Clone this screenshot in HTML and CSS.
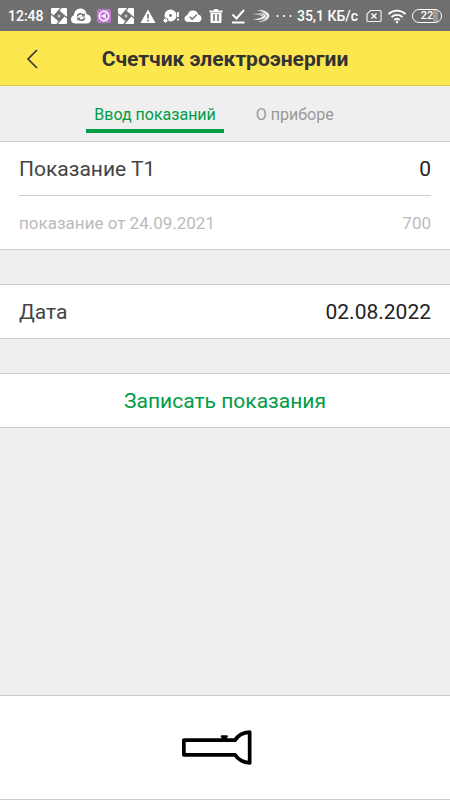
FILE: index.html
```html
<!DOCTYPE html>
<html lang="ru">
<head>
<meta charset="utf-8">
<meta name="viewport" content="width=device-width, initial-scale=1">
<title>Счетчик электроэнергии</title>
<link rel="stylesheet" href="styles.css">
</head>
<body>
<div class="status">
  <span class="status-text">12:48</span>
  <div class="status-icons" aria-hidden="true">
    <svg class="icon" viewBox="0 0 20 20"><rect x="2" y="2" width="16" height="16" rx="1" fill="#fff"/><path d="M10 5l5 5-5 5-5-5z" fill="#6f6f6f"/><path d="M5 10l7-8M10 5l8 7M15 10l-7 8M10 15l-8-7" fill="none" stroke="#6f6f6f" stroke-width="1.200"/><path d="M10 8l2 2-2 2-2-2z" fill="#bbb"/></svg>
    <svg class="icon" viewBox="0 0 20 20"><path d="M4 17.500C1 17.500 0 15.500 0 13.300c0-2 1.200-3.600 3-4C3 5.500 5.500 2.500 9.300 2.500c3.600 0 6 2.400 6.300 5.700 2.700.3 4.400 2.300 4.400 4.800 0 2.700-1.600 4.500-4.200 4.500z" fill="#fff"/><path d="M6.500 10.500c0-2.700 3.500-4 6-1.500M13.500 11.500c0 2.700-3.500 4-6 1.500" fill="none" stroke="#6f6f6f" stroke-width="1.500"/><path d="M13.700 7v3.500h-3.500zM6.300 15v-3.500h3.500z" fill="#6f6f6f"/></svg>
    <svg class="icon" viewBox="0 0 20 20"><rect x="3" y="3" width="14" height="14" rx="2.500" fill="#c278cf"/><circle cx="10" cy="10" r="4.700" fill="none" stroke="#fff" stroke-width="1.500"/><path d="M10 10L6.500 10M10 10l2.500-3.500M10 10l2.500 3.500" stroke="#fff" stroke-width="1.200"/><circle cx="10" cy="10" r="1.500" fill="#fff"/></svg>
    <svg class="icon" viewBox="0 0 20 20"><rect x="2" y="2" width="16" height="16" rx="1" fill="#fff"/><path d="M10 5l5 5-5 5-5-5z" fill="#6f6f6f"/><path d="M5 10l7-8M10 5l8 7M15 10l-7 8M10 15l-8-7" fill="none" stroke="#6f6f6f" stroke-width="1.200"/><path d="M10 8l2 2-2 2-2-2z" fill="#bbb"/></svg>
    <svg class="icon" viewBox="0 0 20 20"><path d="M10 3.500L17.500 17h-15z" fill="#fff"/><path d="M10 8v4.500M10 13.700v1.700" stroke="#6f6f6f" stroke-width="1.600"/></svg>
    <svg class="icon" viewBox="0 0 20 20"><circle cx="9.500" cy="9.500" r="6" fill="#fff"/><circle cx="9.500" cy="9.500" r="1.400" fill="#6f6f6f"/><circle cx="4.500" cy="14.500" r="2.500" fill="#fff" stroke="#6f6f6f"/><path d="M17 6v5M17 12.500v2" stroke="#fff" stroke-width="1.800"/></svg>
    <svg class="icon" viewBox="0 0 20 20"><path d="M5.500 16C3 16 1.500 14.500 1.500 12.500c0-1.900 1.300-3.200 3-3.500C5 6.500 7.100 4.500 10 4.500c2.700 0 4.700 1.600 5.200 4.200 2 .1 3.300 1.600 3.300 3.500 0 2.200-1.500 3.800-3.700 3.800z" fill="#fff"/><path d="M6.700 10.700l2.500 2.500 4.500-4.500" fill="none" stroke="#6f6f6f" stroke-width="1.600"/></svg>
    <svg class="icon" viewBox="0 0 20 20"><path d="M3.500 4.500h4l1-1.500h3l1 1.500h4v2h-13zM4.500 7h11v8.500c0 1-.7 1.500-1.500 1.500H6c-.8 0-1.500-.5-1.500-1.500z" fill="#fff"/><path d="M8 8v7M12 8v7" stroke="#6f6f6f" stroke-width="1.500"/></svg>
    <svg class="icon" viewBox="0 0 20 20"><path d="M4.500 8.500l4 4L16 4M4 16.500h12.500" fill="none" stroke="#fff" stroke-width="2"/></svg>
    <svg class="icon" viewBox="0 0 20 20"><path d="M6 4c6-.5 12 1.500 12.500 5.500-.5 4-5 6.500-11.500 6.500 4-1 6.500-2 7.500-3.500-3 1.500-8 2-12.500.5 4.500-.2 8-.8 9.500-2.500C8.500 8.500 5 8 1.500 8.500 5 6.500 9 6.500 12.500 8 11 6 9 4.800 6 4z" fill="#eee"/><path d="M8 5c4 1 7 3 7.500 5-.5 2-4 4-8 4.500M3 7.500c4-.5 8 .5 10 2.500" fill="none" stroke="#6f6f6f" stroke-width=".7"/></svg>
  </div>
  <svg class="icon" viewBox="0 0 20 20" aria-hidden="true"><circle cx="3.500" cy="10" r="1.100" fill="#fff"/><circle cx="10" cy="10" r="1.100" fill="#fff"/><circle cx="16.500" cy="10" r="1.100" fill="#fff"/></svg>
  <span class="status-text">35,1 КБ/с</span>
  <div class="status-signals">
    <svg class="sim" viewBox="0 0 16 20" aria-hidden="true"><path d="M4.500 4.500H14q1 0 1 1v9q0 1-1 1H2q-1 0-1-1V8z" fill="none" stroke="#eee" stroke-width="1.200"/><path d="M5.500 7.500l5 5M10.500 7.500l-5 5" stroke="#fff" stroke-width="1.400"/></svg>
    <svg class="icon" viewBox="0 0 20 20" aria-hidden="true"><path d="M1.500 8c5-4.600 12-4.600 17 0M4.500 11.200c3.200-3 7.800-3 11 0M7.300 14c1.600-1.500 3.800-1.500 5.400 0" fill="none" stroke="#fff" stroke-width="1.800"/><circle cx="10" cy="16" r="1.200" fill="#fff"/></svg>
    <span class="battery">22</span>
  </div>
</div>
<header class="header">
  <button class="back" type="button" aria-label="Назад"><svg viewBox="0 0 12 22" aria-hidden="true"><path d="M11 2L2 11l9 9" fill="none" stroke="#333" stroke-width="1.600"/></svg></button>
  <h1 class="title">Счетчик электроэнергии</h1>
</header>
<nav class="tabs">
  <a class="tab tab-active" href="#reading" aria-current="page">Ввод показаний</a>
  <a class="tab" href="#device">О приборе</a>
</nav>
<main class="content">
  <form class="form" id="reading">
    <section class="card">
      <div class="row">
        <label for="t1">Показание Т1</label>
        <input class="value" id="t1" type="text" inputmode="numeric" value="0">
      </div>
      <div class="row row-previous">
        <span>показание от 24.09.2021</span>
        <span>700</span>
      </div>
    </section>
    <section class="card">
      <div class="row">
        <label for="date">Дата</label>
        <input class="value" id="date" type="text" value="02.08.2022">
      </div>
    </section>
    <button class="card submit" type="submit">Записать показания</button>
  </form>
</main>
<footer class="footer">
  <button class="torch" type="button" aria-label="Фонарик"><svg viewBox="0 0 74 40" aria-hidden="true"><path d="M3 12.500h52.500C58.500 7.500 63 4.700 70.500 4.200v31.600C63 35.300 58.500 32 55.500 27.500H3z" fill="none" stroke="#000" stroke-width="3.800" stroke-linejoin="round"/><path d="M42 7.500h5q1.200 0 1.200 1.300 0 1-1.200 1.400V12h-5v-1.800q-1.200-.4-1.200-1.400 0-1.300 1.200-1.300z"/></svg></button>
</footer>
</body>
</html>
```
FILE: styles.css
```css
* {
  box-sizing: border-box;
}

body {
  margin: 0;
  min-height: 100vh;
  display: flex;
  flex-direction: column;
  background: #efefef;
  color: #444;
  font-family: Roboto, "Liberation Sans", sans-serif;
  font-size: 21px;
  line-height: 24px;
}

button,
input {
  margin: 0;
  padding: 0;
  border: 0;
  background: none;
  color: inherit;
  font: inherit;
}

svg {
  display: block;
}

.status {
  display: flex;
  align-items: center;
  height: 31px;
  padding: 0 8px;
  background: #6f6f6f;
  color: #fff;
  font-size: 14px;
  font-weight: 500;
}

.status-text {
  white-space: nowrap;
}

.status-icons {
  flex: 1;
  display: flex;
  justify-content: space-between;
  padding: 0 3px 0 5px;
}

.icon {
  flex: none;
  width: 20px;
  height: 20px;
}

.status-icons + .icon {
  margin-right: 3px;
}

.status-signals {
  display: flex;
  align-items: center;
  gap: 5px;
  padding-left: 8px;
}

.sim {
  width: 16px;
  height: 20px;
}

.battery {
  width: 30px;
  border: 1px solid #fff;
  border-radius: 7px;
  background: linear-gradient(to right, transparent 70%, #999 70%, #999 90%, transparent 90%);
  font-size: 11px;
  line-height: 12px;
  text-align: center;
}

.header {
  display: grid;
  grid-template-columns: 64px 1fr 64px;
  align-items: center;
  height: 55px;
  padding-top: 2px;
  border-bottom: 1px solid #ddcb4e;
  background: #fde74f;
  color: #333;
}

.back {
  display: flex;
  justify-content: center;
  padding: 8px;
  cursor: pointer;
}

.back svg {
  width: 12px;
  height: 22px;
}

.title {
  margin: 0;
  font-size: 21px;
  font-weight: 700;
  text-align: center;
  white-space: nowrap;
}

.tabs {
  display: flex;
  justify-content: center;
  gap: 24px;
  height: 56px;
  padding: 17px 42px 0 20px;
  border-bottom: 1px solid #ccc;
  font-size: 16px;
}

.tab {
  height: 30px;
  padding: 0 8px;
  border-bottom: 4px solid transparent;
  color: #999;
  text-decoration: none;
}

.tab-active {
  border-color: #009c46;
  color: #009c46;
}

.content {
  flex: 1;
}

.form {
  display: flex;
  flex-direction: column;
  gap: 34px;
}

.card {
  padding: 0 19px;
  border: solid #ccc;
  border-width: 1px 0;
  background: #fff;
}

.card:first-child {
  border-top: 0;
}

.row {
  display: flex;
  align-items: center;
  justify-content: space-between;
  gap: 16px;
  height: 53px;
}

.row-previous {
  height: 54px;
  border-top: 1px solid #ccc;
  color: #bbb;
  font-size: 17px;
}

.value {
  flex: 1;
  min-width: 0;
  color: #222;
  text-align: right;
}

.submit {
  height: 55px;
  color: #009c46;
  cursor: pointer;
}

.footer {
  display: flex;
  justify-content: center;
  padding: 32px 16px 32px 0;
  border: solid #ccc;
  border-width: 1px 0;
  background: #fff;
}

.torch {
  cursor: pointer;
}

.torch svg {
  width: 76px;
  height: 39px;
}
```
